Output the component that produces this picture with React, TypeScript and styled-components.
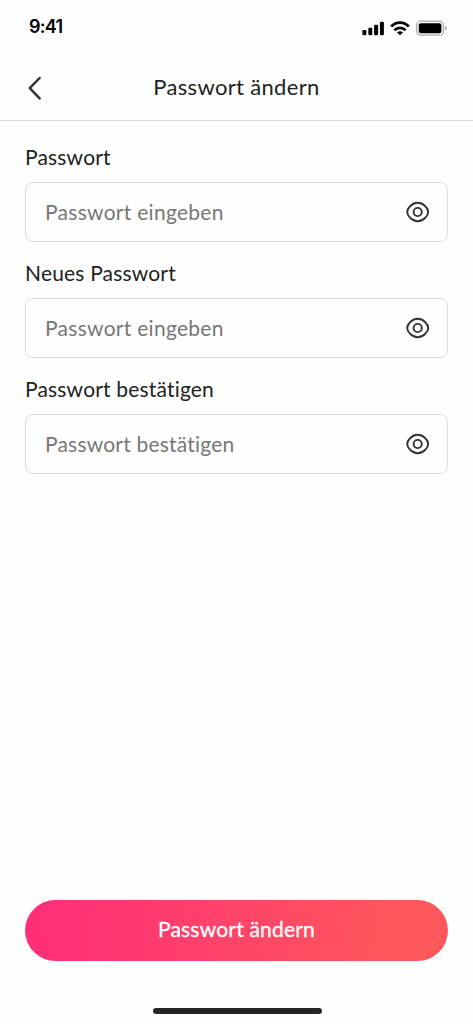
import React from "react";
import styled, { createGlobalStyle } from "styled-components";

const GlobalStyle = createGlobalStyle`
  *, *::before, *::after { box-sizing: border-box; }
  body { margin: 0; background: #fefefe; }
`;

const Screen = styled.div`
  display: flex;
  flex-direction: column;
  width: 100%;
  height: 1024px;
  background: #fefefe;
  color: #222;
  font-family: Lato, "Liberation Sans", sans-serif;
`;

const StatusBar = styled.div`
  display: flex;
  justify-content: space-between;
  align-items: center;
  height: 56px;
  padding: 0 26px 0 29px;
`;

const Time = styled.span`
  color: #000;
  font: 600 18px/22px Inter, sans-serif;
  letter-spacing: -0.7px;
  margin-top: -2px;
`;

const StatusIcons = styled.div`
  display: flex;
  align-items: center;
  gap: 6px;
`;

const Header = styled.header`
  display: grid;
  grid-template-columns: 48px 1fr 48px;
  align-items: center;
  height: 65px;
  border-bottom: 1px solid #d9d9db;
`;

const BackButton = styled.button`
  display: flex;
  justify-content: flex-end;
  padding: 0 6px 0 0;
  border: 0;
  background: none;
`;

const Title = styled.h1`
  margin: 0;
  padding-bottom: 2px;
  text-align: center;
  font-size: 22px;
  line-height: 26px;
  font-weight: 400;
  letter-spacing: 0.33px;
`;

const Form = styled.form`
  display: flex;
  flex: 1;
  flex-direction: column;
  padding: 23px 25px 0;
`;

const Field = styled.div`
  height: 116px;
`;

const Label = styled.label`
  display: block;
  height: 38px;
  line-height: 26px;
  font-size: 21px;
  letter-spacing: 0.18px;
`;

const InputBox = styled.div`
  display: flex;
  align-items: center;
  height: 60px;
  padding: 0 17px 0 19px;
  border: 1px solid #dcdcdc;
  border-radius: 8px;
`;

const Input = styled.input<{ $spacing: number }>`
  flex: 1;
  min-width: 0;
  padding: 0;
  border: 0;
  outline: 0;
  background: none;
  font: 400 21px/26px Lato, "Liberation Sans", sans-serif;
  letter-spacing: ${(p) => p.$spacing}px;
  &::placeholder { color: #777; opacity: 1; }
`;

const RevealButton = styled.button`
  display: flex;
  padding: 0;
  border: 0;
  background: none;
`;

const SubmitButton = styled.button`
  height: 61px;
  margin-top: auto;
  padding: 0 0 3px;
  border: 0;
  border-radius: 31px;
  background: linear-gradient(100deg, #ff2e78 4%, #ff585a 90%);
  color: #fff;
  font: 400 21px/26px Lato, "Liberation Sans", sans-serif;
  letter-spacing: 0.2px;
  -webkit-text-stroke: 0.3px #fff;
`;

const HomeArea = styled.div`
  display: flex;
  justify-content: center;
  height: 63px;
  padding: 47px 0 0 1px;
`;

const HomeIndicator = styled.div`
  width: 169px;
  height: 6px;
  border-radius: 3px;
  background: #272525;
`;

const Eye = () => (
  <svg width="24" height="22" viewBox="0 0 24 22" fill="none" stroke="#333336" strokeWidth="1.9">
    <path d="M1.2 11C1.2 7.2 6 1.8 11.7 1.8S22.2 7.2 22.2 11S17.4 20.2 11.7 20.2S1.2 14.8 1.2 11Z" />
    <circle cx="11.7" cy="11" r="4.1" />
  </svg>
);

const fields = [
  { id: "current", label: "Passwort", hint: "Passwort eingeben", hintSpacing: 0.28 },
  { id: "next", label: "Neues Passwort", hint: "Passwort eingeben", hintSpacing: 0.28 },
  { id: "confirm", label: "Passwort bestätigen", hint: "Passwort bestätigen", hintSpacing: 0.2 },
];

export default function App() {
  return (
    <Screen>
      <GlobalStyle />
      <StatusBar>
        <Time>9:41</Time>
        <StatusIcons>
          <svg width="22" height="16" viewBox="0 0 22 16">
            <rect x="0.4" y="10" width="4" height="5.3" rx="1.2" />
            <rect x="6.3" y="7.7" width="4" height="7.6" rx="1.2" />
            <rect x="12.1" y="4.8" width="4" height="10.5" rx="1.2" />
            <rect x="17.9" y="1.7" width="4" height="13.6" rx="1.2" />
          </svg>
          <svg width="20" height="16" viewBox="0 0 20 16" fill="none" stroke="#000" strokeWidth="2.8">
            <path d="M1.2 6.5C6.2 1.3 13.8 1.3 18.8 6.5" />
            <path d="M4.4 10.2C7.6 7.1 12.4 7.1 15.6 10.2" />
            <path d="M10 15.3L7 12.5Q10 10.2 13 12.5Z" fill="#000" stroke="none" />
          </svg>
          <svg width="31" height="16" viewBox="0 0 31 16">
            <rect x="0.8" y="1.2" width="26.6" height="14" rx="4" fill="none" stroke="#aaa" strokeWidth="1.3" />
            <rect x="2.8" y="3.2" width="22.6" height="10" rx="2" />
            <path d="M29 5.8Q30.8 6.8 30.8 8.3T29 10.8Z" fill="#aaa" />
          </svg>
        </StatusIcons>
      </StatusBar>
      <Header>
        <BackButton type="button" aria-label="Zurück">
          <svg width="14" height="24" viewBox="0 0 14 24" fill="none" stroke="#333336" strokeWidth="2.5" strokeLinecap="round" strokeLinejoin="round">
            <path d="M11.6 2L1.8 12.2L11.6 22.4" />
          </svg>
        </BackButton>
        <Title>Passwort ändern</Title>
      </Header>
      <Form>
        {fields.map((f) => (
          <Field key={f.id}>
            <Label htmlFor={f.id}>{f.label}</Label>
            <InputBox>
              <Input id={f.id} type="text" placeholder={f.hint} $spacing={f.hintSpacing} />
              <RevealButton type="button" aria-label="Passwort anzeigen"><Eye /></RevealButton>
            </InputBox>
          </Field>
        ))}
        <SubmitButton type="button">Passwort ändern</SubmitButton>
      </Form>
      <HomeArea><HomeIndicator /></HomeArea>
    </Screen>
  );
}
